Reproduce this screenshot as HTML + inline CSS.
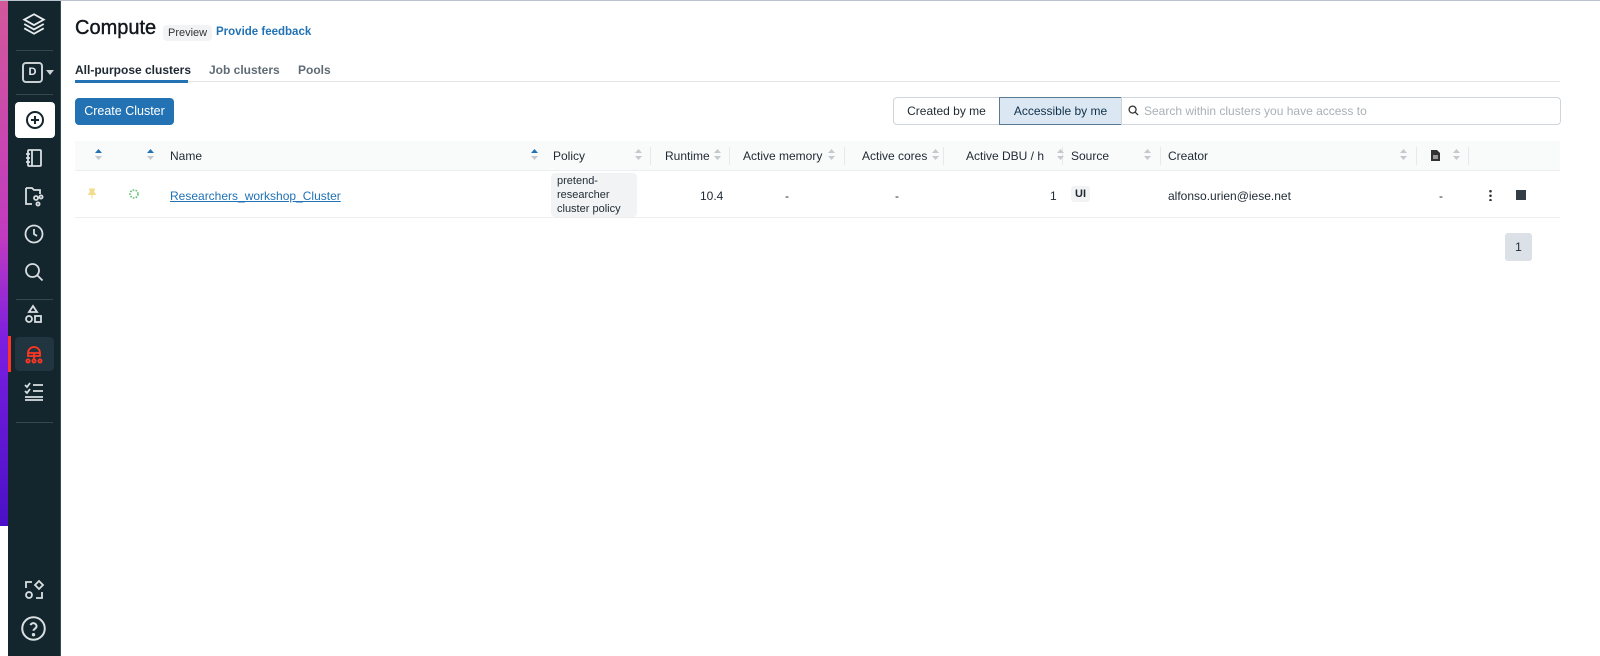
<!DOCTYPE html>
<html><head><meta charset="utf-8"><style>
*{box-sizing:border-box;margin:0;padding:0}
body{width:1600px;height:655px;overflow:hidden;background:#fff;font-family:"Liberation Sans",sans-serif;color:#1f2933;position:relative;border-top:1px solid #b9c3d0}
.a{position:absolute}
.strip{left:0;top:0;width:8px;height:525px;background:linear-gradient(#d2589a 0%,#c03bc0 45%,#7a1ee0 65%,#4a10c8 100%)}
.side{left:8px;top:0;width:53px;height:655px;background:#13252d;border-right:1px solid #3a4a52}
.sep{left:16px;width:37px;height:1px;background:#34474f}
.ic{left:20px;width:26px;height:26px}
.t{font-size:12px;white-space:nowrap}
.hd{font-size:12px;color:#1f2933}
.vs{position:absolute;top:146px;width:1px;height:18px;background:#e6e9ec}
</style></head><body>
<div class="a strip"></div>
<div class="a side"></div>
<svg class="a ic" style="top:10px;left:21px" viewBox="0 0 24 24" fill="none" stroke="#e8ecef" stroke-width="1.7"><path d="M12 3l9 5-9 5-9-5z"/><path d="M3 12l9 5 9-5"/><path d="M3 16l9 5 9-5"/></svg>
<div class="a sep" style="top:49px"></div>
<div class="a" style="left:22px;top:61px;width:21px;height:21px;border:2px solid #c9d0d4;border-radius:4px;color:#e8ecef;font-size:11px;font-weight:bold;text-align:center;line-height:17px">D</div>
<div class="a" style="left:46px;top:69px;border:4px solid transparent;border-top:5px solid #c9d0d4"></div>
<div class="a sep" style="top:93px"></div>
<div class="a" style="left:15px;top:101px;width:40px;height:36px;background:#fff;border-radius:4px"></div>
<svg class="a" style="left:23px;top:107px" width="24" height="24" viewBox="0 0 24 24" fill="none" stroke="#13252d" stroke-width="2"><circle cx="12" cy="12" r="8"/><path d="M12 8v8M8 12h8"/></svg>
<svg class="a" style="left:22px;top:145px" width="24" height="24" viewBox="0 0 24 24" fill="none" stroke="#d9dee1" stroke-width="1.8"><rect x="6" y="4" width="13" height="16" rx="1"/><path d="M10 4v16M4 8h4M4 12h4M4 16h4"/></svg>
<svg class="a" style="left:22px;top:183px" width="24" height="24" viewBox="0 0 24 24" fill="none" stroke="#d9dee1" stroke-width="1.8"><path d="M4 4h6l2 2h6v4M4 4v16h6"/><circle cx="14" cy="14" r="2"/><circle cx="19" cy="13" r="1.6"/><circle cx="16" cy="20" r="1.6"/></svg>
<svg class="a" style="left:22px;top:221px" width="24" height="24" viewBox="0 0 24 24" fill="none" stroke="#d9dee1" stroke-width="1.8"><circle cx="12" cy="12" r="8.5"/><path d="M12 7v5l3 2"/></svg>
<svg class="a" style="left:22px;top:259px" width="24" height="24" viewBox="0 0 24 24" fill="none" stroke="#d9dee1" stroke-width="1.8"><circle cx="10.5" cy="10.5" r="6.5"/><path d="M15.5 15.5l5 5"/></svg>
<div class="a sep" style="top:298px"></div>
<svg class="a" style="left:22px;top:302px" width="24" height="24" viewBox="0 0 24 24" fill="none" stroke="#d9dee1" stroke-width="1.8"><path d="M11 3l4 6H7z"/><circle cx="7" cy="16" r="3"/><rect x="13" y="13" width="6" height="6"/></svg>
<div class="a" style="left:15px;top:336px;width:39px;height:34px;background:#213540;border-radius:4px"></div>
<div class="a" style="left:8px;top:335px;width:3px;height:36px;background:#ff3621"></div>
<svg class="a" style="left:22px;top:341px" width="24" height="24" viewBox="0 0 24 24" fill="none" stroke="#ff3621" stroke-width="1.8"><path d="M6 11a6 6 0 0 1 12 0H6z"/><path d="M12 11v6M6 11v3h12v-3M12 14v3"/><circle cx="6" cy="19" r="1.6"/><circle cx="12" cy="19" r="1.6"/><circle cx="18" cy="19" r="1.6"/></svg>
<svg class="a" style="left:22px;top:378px" width="24" height="24" viewBox="0 0 24 24" fill="none" stroke="#d9dee1" stroke-width="1.8"><path d="M3 6l2 2 3-4M3 12l2 2 3-4M11 6h10M11 12h10M3 18h18M3 21h18"/></svg>
<div class="a sep" style="top:421px"></div>
<svg class="a" style="left:22px;top:577px" width="24" height="24" viewBox="0 0 24 24" fill="none" stroke="#d9dee1" stroke-width="1.8"><path d="M4 10V4h6M14 20h6v-6"/><circle cx="7" cy="17" r="3"/><path d="M17 3l4 4-4 4-4-4z"/></svg>
<svg class="a" style="left:20px;top:614px" width="27" height="27" viewBox="0 0 24 24" fill="none" stroke="#d9dee1" stroke-width="1.8"><circle cx="12" cy="12" r="10"/><path d="M9.3 9a2.8 2.8 0 0 1 5.4 1c0 2-2.7 2.3-2.7 4"/><circle cx="12" cy="17.5" r=".6" fill="#d9dee1"/></svg>

<div class="a" style="left:75px;top:16px;font-size:20px;color:#11171c;-webkit-text-stroke:0.4px #11171c">Compute</div>
<div class="a t" style="left:163px;top:24px;background:#f2f3f4;border-radius:4px;padding:2px 5px;font-size:11px;color:#333">Preview</div>
<div class="a t" style="left:216px;top:25px;font-size:11.5px;color:#2272b4;font-weight:bold">Provide feedback</div>
<div class="a t" style="left:75px;top:62px;font-weight:bold;color:#1f2933">All-purpose clusters</div>
<div class="a t" style="left:209px;top:62px;color:#5f6b74;font-weight:bold">Job clusters</div>
<div class="a t" style="left:298px;top:62px;color:#5f6b74;font-weight:bold">Pools</div>
<div class="a" style="left:75px;top:80px;width:1485px;height:1px;background:#e3e6e9"></div>
<div class="a" style="left:75px;top:79px;width:113px;height:3px;background:#2272b4"></div>
<div class="a t" style="left:75px;top:97px;width:99px;height:27px;background:#2272b4;border-radius:4px;color:#fff;font-size:12.5px;line-height:27px;text-align:center">Create Cluster</div>
<div class="a t" style="left:893px;top:96px;width:107px;height:28px;border:1px solid #cfd5da;border-radius:4px 0 0 4px;line-height:26px;text-align:center">Created by me</div>
<div class="a t" style="left:999px;top:96px;width:123px;height:28px;border:1px solid #5a7a93;background:#dbe8f3;line-height:26px;text-align:center;color:#11304a">Accessible by me</div>
<div class="a t" style="left:1121px;top:96px;width:440px;height:28px;border:1px solid #cfd5da;border-radius:0 4px 4px 0;line-height:26px;padding-left:22px;color:#a8b0b6">Search within clusters you have access to</div>
<svg class="a" style="left:1128px;top:104px" width="11" height="11" viewBox="0 0 12 12" fill="none" stroke="#333" stroke-width="1.4"><circle cx="5" cy="5" r="3.8"/><path d="M8 8l3 3"/></svg>

<div class="a" style="left:75px;top:140px;width:1485px;height:30px;background:#f9fafa;border-bottom:1px solid #eceef0"></div>
<div class="a" style="left:75px;top:216px;width:1485px;height:1px;background:#eceef0"></div>
<div class="vs" style="left:650px"></div><div class="vs" style="left:729px"></div><div class="vs" style="left:844px"></div><div class="vs" style="left:943px"></div><div class="vs" style="left:1062px"></div><div class="vs" style="left:1160px"></div><div class="vs" style="left:1416px"></div><div class="vs" style="left:1468px"></div>
<div class="a hd" style="left:170px;top:148px">Name</div>
<div class="a hd" style="left:553px;top:148px">Policy</div>
<div class="a hd" style="left:665px;top:148px">Runtime</div>
<div class="a hd" style="left:743px;top:148px">Active memory</div>
<div class="a hd" style="left:862px;top:148px">Active cores</div>
<div class="a hd" style="left:966px;top:148px">Active DBU / h</div>
<div class="a hd" style="left:1071px;top:148px">Source</div>
<div class="a hd" style="left:1168px;top:148px">Creator</div>
<svg class="a" style="left:1431px;top:149px" width="9" height="11" viewBox="0 0 9 11"><path d="M0 0h6l3 3v8H0z" fill="#333"/><path d="M2 6h5M2 8h5" stroke="#fff"/></svg>
<svg class="a" style="left:0;top:0" width="1600" height="200">
<g fill="#2272b4"><path d="M95 152l3.5-4 3.5 4z"/><path d="M147 152l3.5-4 3.5 4z"/><path d="M531 152l3.5-4 3.5 4z"/></g>
<g fill="#c4c9cd"><path d="M95 155l3.5 4 3.5-4z"/><path d="M147 155l3.5 4 3.5-4z"/><path d="M531 155l3.5 4 3.5-4z"/>
<path d="M635 152l3.5-4 3.5 4zM635 155l3.5 4 3.5-4z"/>
<path d="M714 152l3.5-4 3.5 4zM714 155l3.5 4 3.5-4z"/>
<path d="M828 152l3.5-4 3.5 4zM828 155l3.5 4 3.5-4z"/>
<path d="M932 152l3.5-4 3.5 4zM932 155l3.5 4 3.5-4z"/>
<path d="M1057 152l3.5-4 3.5 4zM1057 155l3.5 4 3.5-4z"/>
<path d="M1144 152l3.5-4 3.5 4zM1144 155l3.5 4 3.5-4z"/>
<path d="M1400 152l3.5-4 3.5 4zM1400 155l3.5 4 3.5-4z"/>
<path d="M1453 152l3.5-4 3.5 4zM1453 155l3.5 4 3.5-4z"/></g>
<path d="M89.5 188h5l-1 3 2 2.5h-7l2-2.5z M92 193.5v4" fill="#f3dc8a" stroke="#f3dc8a" stroke-width="1"/>
<circle cx="134" cy="193" r="4" fill="none" stroke="#5cc26a" stroke-width="1.6" stroke-dasharray="1.6 1.3"/>
</svg>
<div class="a t" style="left:170px;top:188px;color:#2272b4;text-decoration:underline;font-size:12px">Researchers_workshop_Cluster</div>
<div class="a" style="left:551px;top:172px;width:86px;height:44px;background:#f2f3f4;border-radius:4px;font-size:11px;line-height:14px;padding:1px 6px;color:#1f2933">pretend-<br>researcher<br>cluster policy</div>
<div class="a t" style="left:700px;top:188px">10.4</div>
<div class="a t" style="left:785px;top:188px">-</div>
<div class="a t" style="left:895px;top:188px">-</div>
<div class="a t" style="left:1050px;top:188px">1</div>
<div class="a t" style="left:1071px;top:185px;background:#f2f3f4;border-radius:3px;padding:2px 4px;font-size:11px;font-weight:bold">UI</div>
<div class="a t" style="left:1168px;top:188px">alfonso.urien@iese.net</div>
<div class="a t" style="left:1439px;top:188px">-</div>
<div class="a" style="left:1489px;top:188px;width:3px;height:12px;background:radial-gradient(circle,#333 1.2px,transparent 1.4px) 0 0/3px 4.5px"></div>
<div class="a" style="left:1516px;top:189px;width:10px;height:10px;background:#333d45"></div>
<div class="a t" style="left:1505px;top:232px;width:27px;height:28px;background:#dbe1e6;border-radius:3px;text-align:center;line-height:28px">1</div>
</body></html>
